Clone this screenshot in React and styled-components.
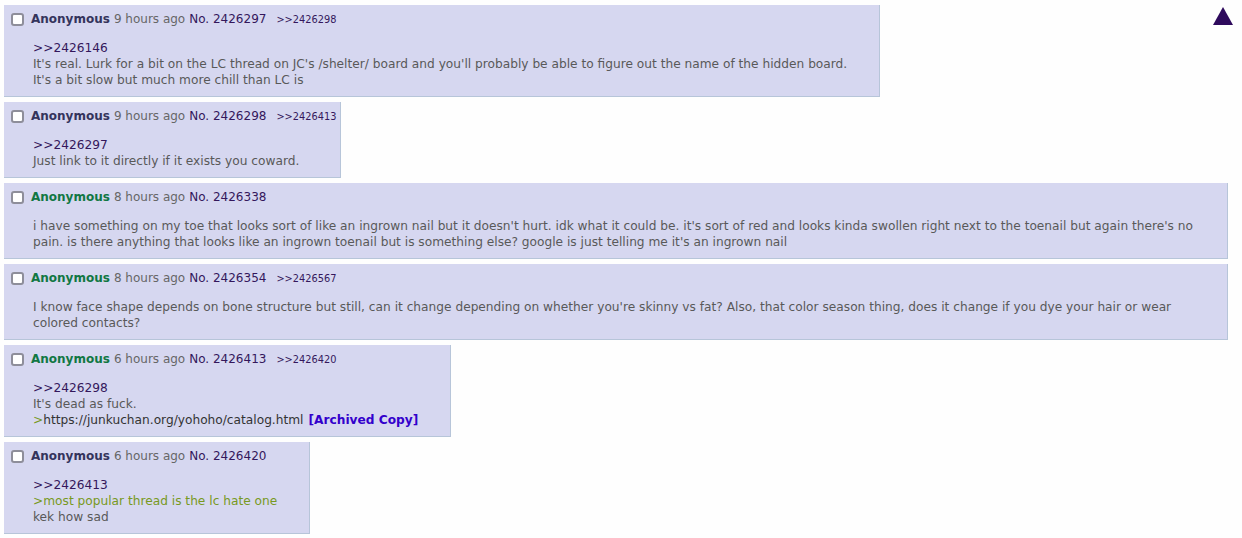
import React from "react";
import styled, { createGlobalStyle } from "styled-components";

const COLORS = {
  page: "#fefefe",
  post: "#d6d7f0",
  border: "#b7c5d9",
  text: "#595959",
  name: "#34345c",
  nameGreen: "#117743",
  link: "#34175c",
  green: "#789922",
  archive: "#3300cc",
};

const GlobalStyle = createGlobalStyle`
  html, body {
    margin: 0;
    padding: 0;
    background: ${COLORS.page};
  }
  body {
    font-family: "DejaVu Sans", Verdana, sans-serif;
    font-size: 12px;
    color: ${COLORS.text};
  }
`;

const posts = [
  {
    no: "2426297",
    ago: "9 hours ago",
    backlinks: ["2426298"],
    lines: [
      { type: "quote", text: ">>2426146" },
      {
        text:
          "It's real. Lurk for a bit on the LC thread on JC's /shelter/ board and you'll probably be able to figure out the name of the hidden board.",
      },
      { text: "It's a bit slow but much more chill than LC is" },
    ],
  },
  {
    no: "2426298",
    ago: "9 hours ago",
    backlinks: ["2426413"],
    lines: [
      { type: "quote", text: ">>2426297" },
      { text: "Just link to it directly if it exists you coward." },
    ],
  },
  {
    no: "2426338",
    ago: "8 hours ago",
    green: true,
    backlinks: [],
    lines: [
      {
        text:
          "i have something on my toe that looks sort of like an ingrown nail but it doesn't hurt. idk what it could be. it's sort of red and looks kinda swollen right next to the toenail but again there's no pain. is there anything that looks like an ingrown toenail but is something else? google is just telling me it's an ingrown nail",
      },
    ],
  },
  {
    no: "2426354",
    ago: "8 hours ago",
    green: true,
    backlinks: ["2426567"],
    lines: [
      {
        text:
          "I know face shape depends on bone structure but still, can it change depending on whether you're skinny vs fat? Also, that color season thing, does it change if you dye your hair or wear colored contacts?",
      },
    ],
  },
  {
    no: "2426413",
    ago: "6 hours ago",
    green: true,
    backlinks: ["2426420"],
    lines: [
      { type: "quote", text: ">>2426298" },
      { text: "It's dead as fuck." },
      { type: "url", text: "https://junkuchan.org/yohoho/catalog.html" },
    ],
  },
  {
    no: "2426420",
    ago: "6 hours ago",
    backlinks: [],
    lines: [
      { type: "quote", text: ">>2426413" },
      { type: "green", text: ">most popular thread is the lc hate one" },
      { text: "kek how sad" },
    ],
  },
];

const Page = styled.div`
  position: relative;
  display: flex;
  flex-direction: column;
  align-items: flex-start;
  gap: 5px;
  padding: 5px 14px 0 4px;
`;

const Post = styled.div`
  max-width: 1224px;
  background: ${COLORS.post};
  border-right: 1px solid ${COLORS.border};
  border-bottom: 1px solid ${COLORS.border};
  padding: 0 0 8px 0;
  box-sizing: border-box;
`;

const Header = styled.div`
  display: flex;
  align-items: center;
  height: 28px;
  padding: 0 4px 0 7px;
  white-space: nowrap;
  font-size: 12px;
`;

const Check = styled.span`
  width: 9px;
  height: 9px;
  border: 2px solid #8e8e9a;
  border-radius: 3px;
  background: #fff;
  margin-right: 7px;
`;

const Name = styled.span`
  font-weight: bold;
  color: ${(p) => (p.$green ? COLORS.nameGreen : COLORS.name)};
  margin-right: 4px;
`;

const Ago = styled.span`
  color: #666;
  margin-right: 4px;
`;

const PostNo = styled.span`
  color: ${COLORS.link};
`;

const Backlink = styled.span`
  font-size: 9.8px;
  color: ${COLORS.link};
  margin-left: 10px;
`;

const Message = styled.div`
  margin: 7px 32px 0 29px;
  line-height: 16px;
  font-size: 12.2px;
`;

const Quote = styled.span`
  color: ${COLORS.link};
`;

const Green = styled.span`
  color: ${COLORS.green};
`;

const Url = styled.span`
  color: #333;
`;

const Archive = styled.span`
  font-weight: bold;
  color: ${COLORS.archive};
  margin-left: 5px;
`;

const Line = ({ line }) => {
  if (line.type === "quote") return <Quote>{line.text}</Quote>;
  if (line.type === "green") return <Green>{line.text}</Green>;
  if (line.type === "url")
    return (
      <>
        <Green>&gt;</Green>
        <Url>{line.text}</Url>
        <Archive>[Archived Copy]</Archive>
      </>
    );
  return <span>{line.text}</span>;
};

const TopArrow = styled.svg`
  position: absolute;
  top: 7px;
  right: 9px;
`;

export default function App() {
  return (
    <>
      <GlobalStyle />
      <Page>
        <TopArrow width="20" height="18" viewBox="0 0 20 18">
          <polygon points="10,0 20,18 0,18" fill="#2e0a5c" />
        </TopArrow>
        {posts.map((post) => (
          <Post key={post.no}>
            <Header>
              <Check />
              <Name $green={post.green}>Anonymous</Name>
              <Ago>{post.ago}</Ago>
              <PostNo>No. {post.no}</PostNo>
              {post.backlinks.map((b) => (
                <Backlink key={b}>&gt;&gt;{b}</Backlink>
              ))}
            </Header>
            <Message>
              {post.lines.map((line, i) => (
                <div key={i}>
                  <Line line={line} />
                </div>
              ))}
            </Message>
          </Post>
        ))}
      </Page>
    </>
  );
}
